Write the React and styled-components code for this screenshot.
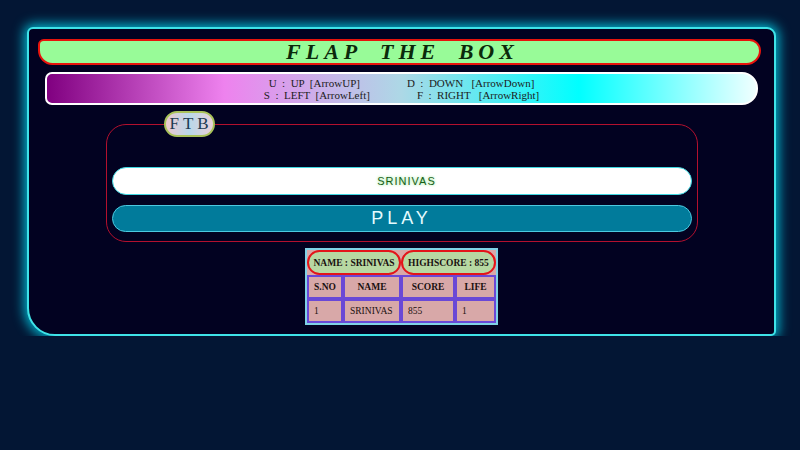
import styled, { createGlobalStyle } from "styled-components";

const GlobalStyle = createGlobalStyle`
  html, body {
    margin: 0;
    background: #031634;
  }
  body {
    font-family: "Liberation Serif", "Times New Roman", serif;
  }
`;

const Page = styled.div`
  padding: 27px 24px 0 27px;
`;

const GameBox = styled.div`
  box-sizing: border-box;
  width: 749px;
  background: #020221;
  border: 2px solid #3fe3e8;
  border-radius: 6px 9px 5px 28px;
  box-shadow: 0 0 12px 3px rgba(0, 229, 255, 0.75);
  padding: 10px 0 9px;
  display: flex;
  flex-direction: column;
  align-items: stretch;
`;

const TitleBar = styled.h1`
  margin: 0 13px 0 9px;
  height: 26px;
  box-sizing: border-box;
  background: #98fb98;
  border: 2px solid #e8140c;
  border-radius: 6px 12px 15px 15px;
  font-size: 22px;
  line-height: 21px;
  font-style: italic;
  font-weight: bold;
  letter-spacing: 5px;
  word-spacing: 8px;
  color: #0b2a0b;
  text-align: center;
  padding-left: 6px;
`;

const KeyBar = styled.div`
  margin: 7px 16px 0;
  height: 33px;
  box-sizing: border-box;
  border: 2px solid #ffffff;
  border-radius: 7px 16px 16px 7px;
  background: linear-gradient(to right, #800080, #ee82ee, #add8e6, #00ffff, #f0ffff);
  display: flex;
  flex-direction: column;
  justify-content: center;
  font-size: 11px;
  line-height: 12px;
  color: #1c1c1c;
`;

const KeyLine = styled.div`
  display: flex;
  justify-content: center;
  gap: 47px;
  white-space: pre;
`;

const Arena = styled.fieldset`
  box-sizing: border-box;
  width: 592px;
  margin: 6px auto 0;
  padding: 30px 5px 9px;
  border: 1px solid #b3102e;
  border-radius: 20px;
  display: flex;
  flex-direction: column;
  gap: 10px;
`;

const Badge = styled.legend`
  margin-left: 52px;
  padding: 0 4px;
  height: 26px;
  box-sizing: border-box;
  border: 2px solid #a9c25a;
  border-radius: 13px;
  background: linear-gradient(to right, #ecc8cf, #b9d8ea, #ead0d8);
  font-size: 17px;
  line-height: 22px;
  color: #1d3b52;
`;

const NameInput = styled.input`
  box-sizing: border-box;
  width: 100%;
  height: 28px;
  border: 1.5px solid #3fd6e0;
  border-radius: 14px;
  background: #ffffff;
  padding: 0 0 0 10px;
  text-align: center;
  font-family: "Liberation Sans", Arial, sans-serif;
  font-size: 11px;
  letter-spacing: 1px;
  color: #185e18;
  text-shadow: 0 0 3px #7fe07f;
  outline: none;
`;

const PlayButton = styled.button`
  box-sizing: border-box;
  width: 100%;
  height: 27px;
  border: 1px solid #4cc9e0;
  border-radius: 14px;
  background: #017b9b;
  font-family: "Liberation Sans", Arial, sans-serif;
  font-size: 18px;
  letter-spacing: 4px;
  color: #e4fbff;
  padding: 0;
  cursor: pointer;
`;

const ScoreTable = styled.table`
  margin: 6px auto 0;
  border: 2px solid #7fd2e6;
  border-spacing: 0;
  background: #d8a8a8;
  font-size: 9.5px;
  color: #1a1010;
`;

const BestCell = styled.th`
  height: 25px;
  box-sizing: border-box;
  padding: 0;
  border: 2.5px solid #e3141a;
  border-radius: 14px;
  background: #b7d8a2;
  font-weight: bold;
  text-align: center;
`;

const HeadCell = styled.th`
  height: 24px;
  box-sizing: border-box;
  width: ${(p) => p.w}px;
  padding: 0;
  border: 2px solid #6a48d6;
  font-weight: bold;
  text-align: center;
`;

const DataCell = styled.td`
  height: 24px;
  box-sizing: border-box;
  padding: 0 5px;
  border: 2px solid #6a48d6;
  text-align: left;
`;

const players = [{ sno: 1, name: "SRINIVAS", score: 855, life: 1 }];

const App = () => {
  return (
    <Page>
      <GlobalStyle />
      <GameBox>
        <TitleBar>FLAP THE BOX</TitleBar>
        <KeyBar>
          <KeyLine>
            <span>U  :  UP  [ArrowUP]</span>
            <span>D  :  DOWN   [ArrowDown]</span>
          </KeyLine>
          <KeyLine>
            <span>S  :  LEFT  [ArrowLeft]</span>
            <span>F  :  RIGHT   [ArrowRight]</span>
          </KeyLine>
        </KeyBar>
        <Arena>
          <Badge>F T B</Badge>
          <NameInput defaultValue="SRINIVAS" />
          <PlayButton>PLAY</PlayButton>
        </Arena>
        <ScoreTable>
          <thead>
            <tr>
              <BestCell colSpan={2}>NAME : SRINIVAS</BestCell>
              <BestCell colSpan={2}>HIGHSCORE : 855</BestCell>
            </tr>
            <tr>
              <HeadCell w={36}>S.NO</HeadCell>
              <HeadCell w={58}>NAME</HeadCell>
              <HeadCell w={54}>SCORE</HeadCell>
              <HeadCell w={41}>LIFE</HeadCell>
            </tr>
          </thead>
          <tbody>
            {players.map((p) => (
              <tr key={p.sno}>
                <DataCell>{p.sno}</DataCell>
                <DataCell>{p.name}</DataCell>
                <DataCell>{p.score}</DataCell>
                <DataCell>{p.life}</DataCell>
              </tr>
            ))}
          </tbody>
        </ScoreTable>
      </GameBox>
    </Page>
  );
};

export default App;
